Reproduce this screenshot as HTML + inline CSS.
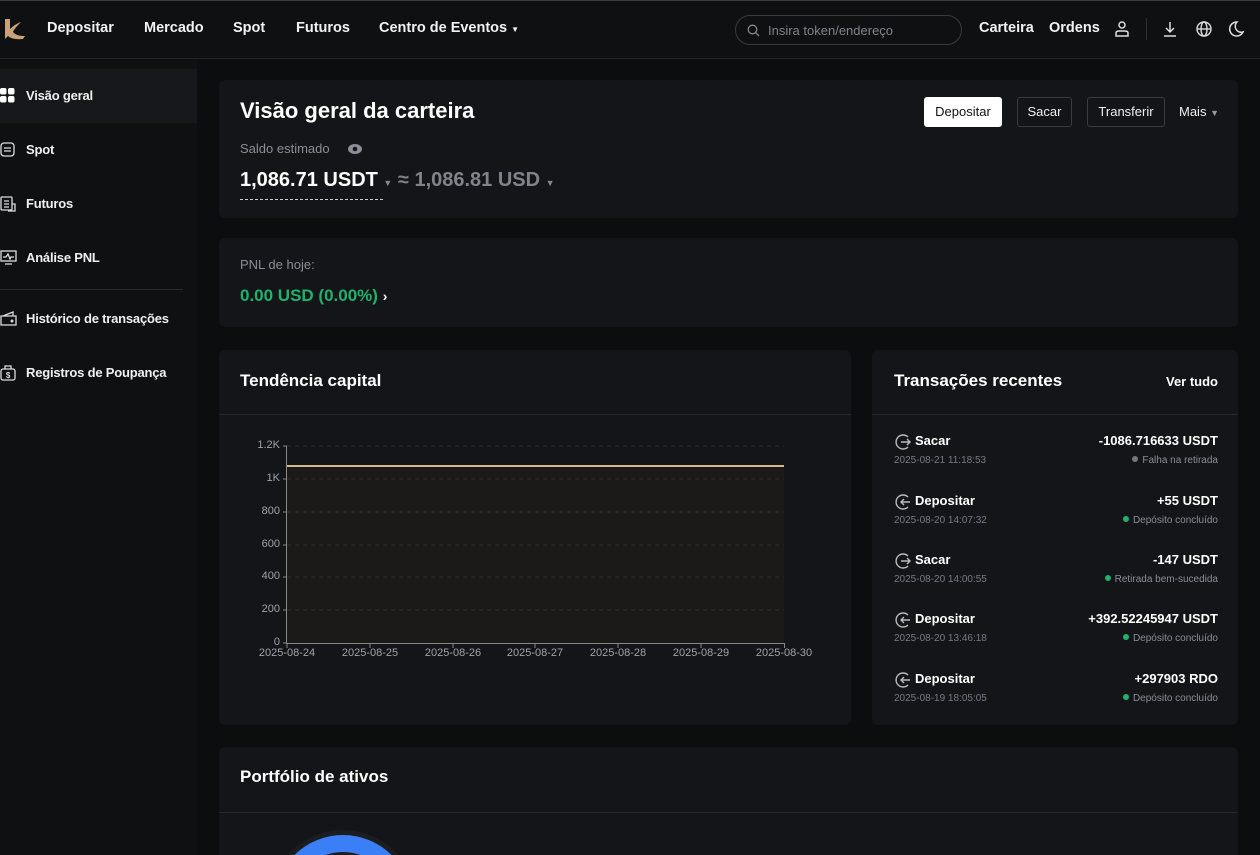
<!DOCTYPE html>
<html><head><meta charset="utf-8"><style>
*{margin:0;padding:0;box-sizing:border-box}
html,body{width:1260px;height:855px;overflow:hidden}
body{background:#0c0d0f;font-family:"Liberation Sans",sans-serif;color:#fff;position:relative}
.hdr{position:absolute;left:0;top:0;width:1260px;height:59px;background:#0f1012;border-top:1px solid #3a3b3e;border-bottom:1px solid #26272a}
.nav{position:absolute;top:19px;font-size:14.5px;font-weight:bold;color:#f2f2f2}
.side{position:absolute;left:0;top:59px;width:197px;height:796px;background:#0f1012}
.si{position:absolute;left:0;width:197px;height:54px;font-size:13px;font-weight:bold;color:#f0f0f0;letter-spacing:-0.2px}
.si span{position:absolute;left:26px;top:19px}
.si svg{position:absolute;left:0;top:19px}
.card{position:absolute;background:#141518;border-radius:6px}
.btn{position:absolute;top:97px;height:30px;border:1px solid #3a3b3f;border-radius:3px;font-size:13px;color:#eee;text-align:center;line-height:28px}
.tx{position:absolute;left:894px;width:324px;height:40px}
.tx .n{position:absolute;left:21px;top:0;font-size:13px;font-weight:bold}
.tx .d{position:absolute;left:0;top:22px;font-size:10px;color:#777b82}
.tx .a{position:absolute;right:0;top:0;font-size:13px;font-weight:bold}
.tx .s{position:absolute;right:0;top:22px;font-size:10px;color:#8a8e95}
.tx svg{position:absolute;left:0;top:0}
.dot{display:inline-block;width:6px;height:6px;border-radius:50%;background:#20b26c;margin-right:4px;vertical-align:1px}
.yl{position:absolute;font-size:11px;color:#a0a3a8;text-align:right;width:40px;left:240px}
.xl{position:absolute;top:647px;font-size:11px;color:#a0a3a8;width:70px;text-align:center}
</style></head><body>
<div class="hdr">
<svg style="position:absolute;left:3px;top:16px" width="24" height="24" viewBox="0 0 24 24"><path d="M2 2 L7 2 L7 12 Q12 7 18 5 Q11 12 10 15 Q13 19 22 19 L20 22 Q9 23 5 19 L2 22 Z" fill="#c9a27a"/></svg>
<div class="nav" style="left:47px">Depositar</div>
<div class="nav" style="left:144px">Mercado</div>
<div class="nav" style="left:233px">Spot</div>
<div class="nav" style="left:296px">Futuros</div>
<div class="nav" style="left:379px">Centro de Eventos <span style="font-size:8px">▼</span></div>
<div style="position:absolute;left:735px;top:14px;width:227px;height:30px;border:1px solid #3a3b3f;border-radius:15px">
<svg style="position:absolute;left:11px;top:8px" width="13" height="13" viewBox="0 0 13 13"><circle cx="5.5" cy="5.5" r="4.3" fill="none" stroke="#888" stroke-width="1.3"/><path d="M8.7 8.7 L12 12" stroke="#888" stroke-width="1.3"/></svg>
<span style="position:absolute;left:32px;top:7px;font-size:13px;color:#80848a">Insira token/endereço</span></div>
<div class="nav" style="left:979px">Carteira</div>
<div class="nav" style="left:1049px">Ordens</div>
<svg style="position:absolute;left:1113px;top:19px" width="18" height="18" viewBox="0 0 18 18" fill="none" stroke="#ddd" stroke-width="1.5"><circle cx="9" cy="5" r="3"/><path d="M3 16 V13 Q3 11 6 11 H12 Q15 11 15 13 V16 Z"/></svg>
<div style="position:absolute;left:1146px;top:17px;width:1px;height:22px;background:#2e2f33"></div>
<svg style="position:absolute;left:1161px;top:19px" width="18" height="18" viewBox="0 0 18 18" fill="none" stroke="#ddd" stroke-width="1.5"><path d="M9 2 V12 M5 8 L9 12 L13 8 M3 16 H15"/></svg>
<svg style="position:absolute;left:1195px;top:19px" width="18" height="18" viewBox="0 0 18 18" fill="none" stroke="#ddd" stroke-width="1.4"><circle cx="9" cy="9" r="7"/><ellipse cx="9" cy="9" rx="3" ry="7"/><path d="M2 9 H16"/></svg>
<svg style="position:absolute;left:1227px;top:19px" width="18" height="18" viewBox="0 0 18 18" fill="none" stroke="#ddd" stroke-width="1.5"><path d="M10 2 A7 7 0 1 0 16 12 A6 6 0 0 1 10 2 Z"/></svg>
</div>
<div class="side">
<div class="si" style="top:10px;background:#17181b"><svg width="15" height="15" viewBox="0 0 15 15" fill="#fff"><rect x="0" y="0" width="6.5" height="6.5" rx="2"/><rect x="8" y="0" width="6.5" height="6.5" rx="2"/><rect x="0" y="8" width="6.5" height="6.5" rx="2"/><rect x="8" y="8" width="6.5" height="6.5" rx="2"/></svg><span>Visão geral</span></div>
<div class="si" style="top:64px"><svg width="15" height="15" viewBox="0 0 15 15" fill="none" stroke="#ddd" stroke-width="1.3"><rect x="1" y="1" width="13" height="13" rx="3"/><path d="M4 6 H11 M4 9 H11"/></svg><span>Spot</span></div>
<div class="si" style="top:118px"><svg width="16" height="16" viewBox="0 0 16 16" fill="none" stroke="#ddd" stroke-width="1.3"><rect x="1" y="1" width="11" height="13" rx="1"/><path d="M4 5 H9 M4 8 H9 M4 11 H9 M12 8 H15 V15 H8"/></svg><span>Futuros</span></div>
<div class="si" style="top:172px"><svg width="17" height="15" viewBox="0 0 17 15" fill="none" stroke="#ddd" stroke-width="1.3"><rect x="1" y="1" width="15" height="10"/><path d="M3 7 H6 L8 4 L10 9 L11 7 H14 M5 14 H12"/></svg><span>Análise PNL</span></div>
<div style="position:absolute;left:0;top:230px;width:183px;height:1px;background:#2a2b2e"></div>
<div class="si" style="top:233px"><svg width="17" height="15" viewBox="0 0 17 15" fill="none" stroke="#ddd" stroke-width="1.3"><path d="M1 5 H16 V14 H1 Z M3 5 L13 1 V5"/><circle cx="12" cy="10" r=".8" fill="#ddd"/></svg><span>Histórico de transações</span></div>
<div class="si" style="top:287px"><svg width="16" height="16" viewBox="0 0 16 16" fill="none" stroke="#ddd" stroke-width="1.3"><rect x="1" y="4" width="14" height="11" rx="2"/><path d="M5 4 V1 H11 V4"/><text x="8" y="13" font-size="8" fill="#ddd" stroke="none" text-anchor="middle" font-family="Liberation Sans">$</text></svg><span>Registros de Poupança</span></div>
</div>

<div class="card" style="left:219px;top:80px;width:1019px;height:138px">
<div style="position:absolute;left:21px;top:18px;font-size:22px;font-weight:bold">Visão geral da carteira</div>
<div style="position:absolute;left:21px;top:61px;font-size:13px;color:#8a8e95">Saldo estimado</div>
<svg style="position:absolute;left:129px;top:63px" width="14" height="12" viewBox="0 0 14 12"><ellipse cx="7" cy="6" rx="7" ry="5" fill="#8a8e95"/><circle cx="7" cy="6" r="2.3" fill="#141518"/></svg>
<div style="position:absolute;left:21px;top:89px;font-size:20px;font-weight:bold">1,086.71 USDT <span style="font-size:9px;color:#888">▼</span> <span style="color:#80848a;font-weight:bold">≈ 1,086.81 USD</span> <span style="font-size:9px;color:#888">▼</span></div>
<div style="position:absolute;left:21px;top:119px;width:143px;border-top:1px dashed #ccc"></div>
</div>
<div class="btn" style="left:924px;width:78px;background:#fff;color:#111;border-color:#fff">Depositar</div>
<div class="btn" style="left:1017px;width:55px">Sacar</div>
<div class="btn" style="left:1087px;width:78px">Transferir</div>
<div style="position:absolute;left:1179px;top:104px;font-size:13px;color:#eee">Mais <span style="font-size:9px;color:#999">▼</span></div>

<div class="card" style="left:219px;top:238px;width:1019px;height:89px">
<div style="position:absolute;left:21px;top:19px;font-size:13px;color:#8a8e95">PNL de hoje:</div>
<div style="position:absolute;left:21px;top:48px;font-size:17px;font-weight:bold;color:#20b26c">0.00 USD (0.00%) <span style="color:#fff;font-size:14px">›</span></div>
</div>

<div class="card" style="left:219px;top:350px;width:632px;height:375px">
<div style="position:absolute;left:21px;top:21px;font-size:17px;font-weight:bold">Tendência capital</div>
<div style="position:absolute;left:0;top:64px;width:632px;height:1px;background:#26272a"></div>
</div>
<svg style="position:absolute;left:0;top:0" width="1260" height="855">
<rect x="287" y="466" width="497" height="177" fill="#1c1a19"/>
<g stroke="#2c2d30" stroke-dasharray="4 4"><line x1="287" y1="446" x2="784" y2="446"/><line x1="287" y1="479" x2="784" y2="479"/><line x1="287" y1="512" x2="784" y2="512"/><line x1="287" y1="545" x2="784" y2="545"/><line x1="287" y1="577" x2="784" y2="577"/><line x1="287" y1="610" x2="784" y2="610"/></g>
<line x1="287" y1="466" x2="784" y2="466" stroke="#d9b68a" stroke-width="2"/>
<g stroke="#888"><line x1="286.5" y1="446" x2="286.5" y2="643"/><line x1="286" y1="643.5" x2="785" y2="643.5"/>
<path d="M283 446H287M283 479H287M283 512H287M283 545H287M283 577H287M283 610H287M283 643H287"/>
<path d="M287 643V648M370 643V648M453 643V648M535 643V648M618 643V648M701 643V648M784.5 643V648"/></g>
</svg>
<div class="yl" style="top:439px">1.2K</div><div class="yl" style="top:472px">1K</div><div class="yl" style="top:505px">800</div><div class="yl" style="top:538px">600</div><div class="yl" style="top:570px">400</div><div class="yl" style="top:603px">200</div><div class="yl" style="top:636px">0</div>
<div class="xl" style="left:252px">2025-08-24</div><div class="xl" style="left:335px">2025-08-25</div><div class="xl" style="left:418px">2025-08-26</div><div class="xl" style="left:500px">2025-08-27</div><div class="xl" style="left:583px">2025-08-28</div><div class="xl" style="left:666px">2025-08-29</div><div class="xl" style="left:749px">2025-08-30</div>

<div class="card" style="left:872px;top:350px;width:366px;height:375px">
<div style="position:absolute;left:22px;top:21px;font-size:17px;font-weight:bold">Transações recentes</div>
<div style="position:absolute;right:20px;top:24px;font-size:13px;font-weight:bold">Ver tudo</div>
<div style="position:absolute;left:0;top:64px;width:366px;height:1px;background:#26272a"></div>
</div>
<div class="tx" style="top:433px"><svg width="18" height="18" viewBox="0 0 18 18" fill="none" stroke="#bbb" stroke-width="1.4"><path d="M14 4 A7 7 0 1 0 14 14 M7 9 H16 M13 6 L16 9 L13 12"/></svg><div class="n">Sacar</div><div class="a">-1086.716633 USDT</div><div class="d">2025-08-21 11:18:53</div><div class="s"><span class="dot" style="background:#777"></span>Falha na retirada</div></div>
<div class="tx" style="top:493px"><svg width="18" height="18" viewBox="0 0 18 18" fill="none" stroke="#bbb" stroke-width="1.4"><path d="M14 4 A7 7 0 1 0 14 14 M7 9 H16 M10 6 L7 9 L10 12"/></svg><div class="n">Depositar</div><div class="a">+55 USDT</div><div class="d">2025-08-20 14:07:32</div><div class="s"><span class="dot"></span>Depósito concluído</div></div>
<div class="tx" style="top:552px"><svg width="18" height="18" viewBox="0 0 18 18" fill="none" stroke="#bbb" stroke-width="1.4"><path d="M14 4 A7 7 0 1 0 14 14 M7 9 H16 M13 6 L16 9 L13 12"/></svg><div class="n">Sacar</div><div class="a">-147 USDT</div><div class="d">2025-08-20 14:00:55</div><div class="s"><span class="dot"></span>Retirada bem-sucedida</div></div>
<div class="tx" style="top:611px"><svg width="18" height="18" viewBox="0 0 18 18" fill="none" stroke="#bbb" stroke-width="1.4"><path d="M14 4 A7 7 0 1 0 14 14 M7 9 H16 M10 6 L7 9 L10 12"/></svg><div class="n">Depositar</div><div class="a">+392.52245947 USDT</div><div class="d">2025-08-20 13:46:18</div><div class="s"><span class="dot"></span>Depósito concluído</div></div>
<div class="tx" style="top:671px"><svg width="18" height="18" viewBox="0 0 18 18" fill="none" stroke="#bbb" stroke-width="1.4"><path d="M14 4 A7 7 0 1 0 14 14 M7 9 H16 M10 6 L7 9 L10 12"/></svg><div class="n">Depositar</div><div class="a">+297903 RDO</div><div class="d">2025-08-19 18:05:05</div><div class="s"><span class="dot"></span>Depósito concluído</div></div>

<div class="card" style="left:219px;top:747px;width:1019px;height:108px;overflow:hidden;border-radius:6px 6px 0 0">
<div style="position:absolute;left:21px;top:20px;font-size:17px;font-weight:bold">Portfólio de ativos</div>
<div style="position:absolute;left:0;top:65px;width:1019px;height:1px;background:#26272a"></div>
<div style="position:absolute;left:50px;top:83px;width:148px;height:148px;border-radius:50%;background:#1c1d21"></div>
<div style="position:absolute;left:55px;top:88px;width:138px;height:138px;border-radius:50%;border:17px solid #3a7ff5"></div>
</div>
</body></html>
